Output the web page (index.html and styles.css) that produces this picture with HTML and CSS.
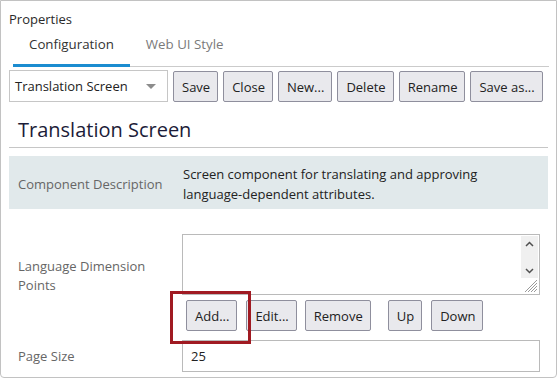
FILE: index.html
```html
<!DOCTYPE html>
<html lang="en">
<head>
  <meta charset="UTF-8" />
  <title>Properties</title>
  <link rel="stylesheet" href="styles.css">
</head>
<body>

<div class="panel">
  <div class="title">Properties</div>

  <div class="tabs">
    <div class="tab active">Configuration</div>
    <div class="tab">Web UI Style</div>
  </div>

  <div class="toolbar">
    <div class="select">
      <span>Translation Screen</span>
      <svg class="select-arrow" width="10" height="5" viewBox="0 0 10 5"><path d="M0 0h10L5 5z" fill="#8c8c8c"/></svg>
    </div>
    <button class="btn">Save</button>
    <button class="btn">Close</button>
    <button class="btn">New...</button>
    <button class="btn">Delete</button>
    <button class="btn">Rename</button>
    <button class="btn">Save as...</button>
  </div>

  <h2 class="heading">Translation Screen</h2>

  <div class="desc">
    <div class="desc-label">Component Description</div>
    <div class="desc-value">Screen component for translating and approving language-dependent attributes.</div>
  </div>

  <div class="form-row first">
    <div class="label label-multi">Language Dimension Points</div>
    <div class="field">
      <div class="textarea">
        <div class="ta-side">
          <div class="ta-scroll">
            <svg width="9" height="6" viewBox="0 0 9 6"><path d="M1 5l3.5-3.5L8 5" fill="none" stroke="#505050" stroke-width="1.5"/></svg>
            <svg width="9" height="6" viewBox="0 0 9 6"><path d="M1 1l3.5 3.5L8 1" fill="none" stroke="#505050" stroke-width="1.5"/></svg>
          </div>
          <svg class="ta-grip" width="15" height="15" viewBox="0 0 15 15">
            <path d="M14 2L2 14M14 5L5 14M14 8L8 14M14 11L11 14" stroke="#9a9a9a" stroke-width="1"/>
          </svg>
        </div>
      </div>
      <div class="list-buttons">
        <button class="btn btn-add">Add...</button>
        <button class="btn btn-edit">Edit...</button>
        <button class="btn btn-remove">Remove</button>
        <button class="btn btn-up">Up</button>
        <button class="btn btn-down">Down</button>
      </div>
    </div>
  </div>

  <div class="form-row second">
    <div class="label label-single">Page Size</div>
    <div class="input">25</div>
  </div>
</div>

</body>
</html>
```

FILE: styles.css
```css
body {
  margin: 0;
  background: #ffffff;
  font-family: 'Open Sans', sans-serif;
  font-size: 13px;
  color: #222;
}

.panel {
  width: 557px;
  height: 378px;
  box-sizing: border-box;
  border: 1px solid #c2c2c2;
  border-radius: 0 0 4px 4px;
}

.title {
  padding: 9px 0 0 8px;
  line-height: 18px;
  color: #2a2a2a;
}

.tabs {
  display: flex;
  margin: 0 7px 0 12px;
  border-bottom: 1px solid #cbcbcb;
}

.tab {
  padding: 6px 16px 10px;
  line-height: 20px;
  font-size: 13.3px;
  color: #7a7a7a;
  border-bottom: 3px solid transparent;
  margin-bottom: -1px;
}

.tab.active {
  color: #333;
  border-bottom-color: #1b8cd0;
}

.toolbar {
  display: flex;
  align-items: flex-end;
  gap: 5px;
  margin: 3px 0 0 8px;
}

.select {
  width: 159px;
  height: 32px;
  box-sizing: border-box;
  border: 1px solid #c6c6c6;
  padding: 0 11px 0 5px;
  display: flex;
  align-items: center;
  justify-content: space-between;
}

.btn {
  height: 31px;
  padding: 0 7px 0 8px;
  border: 1px solid #8f8f9d;
  border-radius: 2px;
  background: #e9e9ed;
  font-family: 'Open Sans', sans-serif;
  font-size: 13px;
  color: #222;
}

.heading {
  margin: 14px 8px 0 8px;
  padding: 0 0 3px 9px;
  font-size: 20px;
  font-weight: 400;
  line-height: 28px;
  color: #1c1c38;
  border-bottom: 1px solid #c6c6c6;
}

.desc {
  display: grid;
  grid-template-columns: 174px 1fr;
  margin: 8px 8px 0 8px;
  padding: 8px 0 5px;
  background: #e1e9eb;
}

.desc-label {
  align-self: center;
  padding-left: 9px;
  color: #666;
}

.desc-value {
  line-height: 20px;
  color: #222;
  padding-right: 60px;
}

.form-row {
  display: grid;
  grid-template-columns: 173px 358px;
  margin: 0 8px;
}

.form-row.first {
  margin-top: 25px;
}

.form-row.second {
  margin-top: 9px;
}

.label {
  padding-left: 9px;
  color: #666;
}

.label-multi {
  width: 150px;
  padding-top: 23px;
  line-height: 19px;
}

.label-single {
  align-self: center;
  line-height: 20px;
}

.textarea {
  height: 61px;
  box-sizing: border-box;
  border: 1px solid #bababa;
  padding: 1px;
  display: flex;
  justify-content: flex-end;
}

.ta-side {
  width: 17px;
  display: flex;
  flex-direction: column;
}

.ta-scroll {
  height: 42px;
  background: #f0f0f0;
  display: flex;
  flex-direction: column;
  align-items: center;
  justify-content: space-between;
  padding: 5px 0 4px;
  box-sizing: border-box;
}

.ta-grip {
  margin-top: auto;
  align-self: flex-end;
}

.list-buttons {
  display: flex;
  margin-top: 5px;
  padding-left: 4px;
}

.btn-add {
  position: relative;
}

.btn-add::after {
  content: '';
  position: absolute;
  left: -17px;
  top: -10px;
  width: 81px;
  height: 53px;
  box-sizing: border-box;
  border: 3px solid #a01a22;
  z-index: 2;
}

.btn-edit {
  margin-left: 9px;
}

.btn-remove {
  margin-left: 8px;
}

.btn-up {
  margin-left: 17px;
}

.btn-down {
  margin-left: 9px;
}

.input {
  height: 32px;
  box-sizing: border-box;
  border: 1px solid #bababa;
  padding-left: 8px;
  line-height: 30px;
  color: #222;
}
```
